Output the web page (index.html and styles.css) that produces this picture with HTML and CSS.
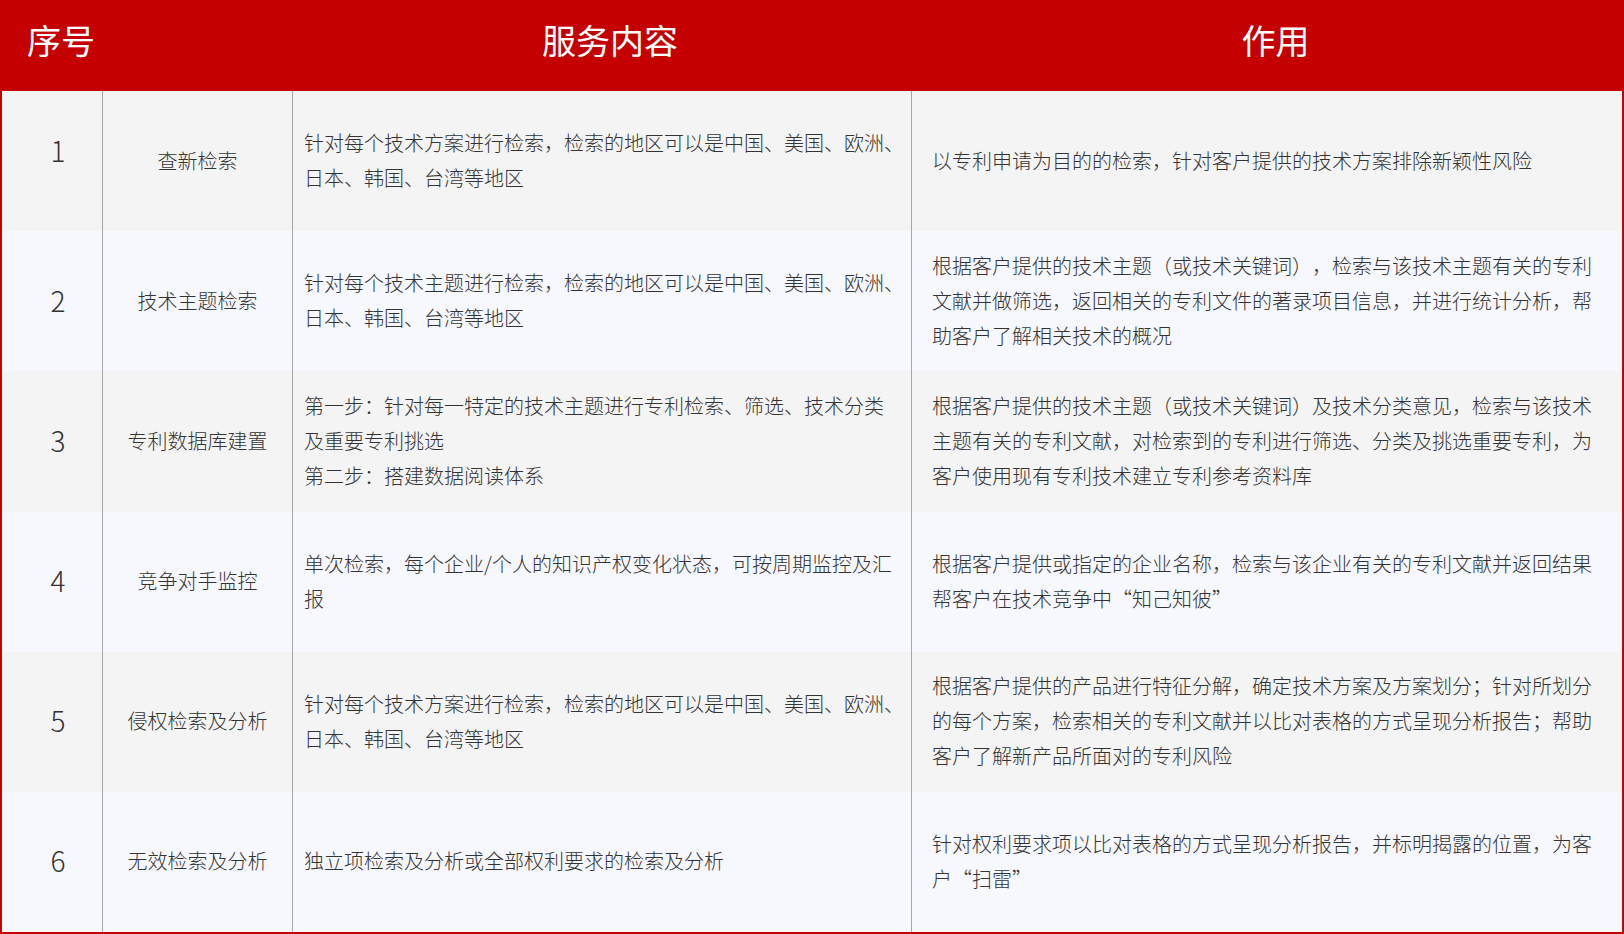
FILE: index.html
```html
<!DOCTYPE html>
<html lang="zh-CN">
<head>
<meta charset="utf-8">
<title>服务内容</title>
<link rel="stylesheet" href="styles.css">
</head>
<body>
<div class="table">
  <div class="head">
    <div class="th">序号</div>
    <div class="th"></div>
    <div class="th">服务内容</div>
    <div class="th">作用</div>
  </div>
  <div class="body">
    <div class="row odd">
      <div class="cell num first">1</div>
      <div class="cell name">查新检索</div>
      <div class="cell desc">针对每个技术方案进行检索，检索的地区可以是中国、美国、欧洲、日本、韩国、台湾等地区</div>
      <div class="cell use">以专利申请为目的的检索，针对客户提供的技术方案排除新颖性风险</div>
    </div>
    <div class="row even">
      <div class="cell num">2</div>
      <div class="cell name">技术主题检索</div>
      <div class="cell desc">针对每个技术主题进行检索，检索的地区可以是中国、美国、欧洲、日本、韩国、台湾等地区</div>
      <div class="cell use">根据客户提供的技术主题（或技术关键词），检索与该技术主题有关的专利文献并做筛选，返回相关的专利文件的著录项目信息，并进行统计分析，帮助客户了解相关技术的概况</div>
    </div>
    <div class="row odd">
      <div class="cell num">3</div>
      <div class="cell name">专利数据库建置</div>
      <div class="cell desc">第一步：针对每一特定的技术主题进行专利检索、筛选、技术分类<br>及重要专利挑选<br>第二步：搭建数据阅读体系</div>
      <div class="cell use">根据客户提供的技术主题（或技术关键词）及技术分类意见，检索与该技术主题有关的专利文献，对检索到的专利进行筛选、分类及挑选重要专利，为客户使用现有专利技术建立专利参考资料库</div>
    </div>
    <div class="row even">
      <div class="cell num">4</div>
      <div class="cell name">竞争对手监控</div>
      <div class="cell desc">单次检索，每个企业/个人的知识产权变化状态，可按周期监控及汇报</div>
      <div class="cell use">根据客户提供或指定的企业名称，检索与该企业有关的专利文献并返回结果帮客户在技术竞争中“知己知彼”</div>
    </div>
    <div class="row odd">
      <div class="cell num">5</div>
      <div class="cell name">侵权检索及分析</div>
      <div class="cell desc">针对每个技术方案进行检索，检索的地区可以是中国、美国、欧洲、日本、韩国、台湾等地区</div>
      <div class="cell use">根据客户提供的产品进行特征分解，确定技术方案及方案划分；针对所划分的每个方案，检索相关的专利文献并以比对表格的方式呈现分析报告；帮助客户了解新产品所面对的专利风险</div>
    </div>
    <div class="row even">
      <div class="cell num">6</div>
      <div class="cell name">无效检索及分析</div>
      <div class="cell desc">独立项检索及分析或全部权利要求的检索及分析</div>
      <div class="cell use">针对权利要求项以比对表格的方式呈现分析报告，并标明揭露的位置，为客户“扫雷”</div>
    </div>
  </div>
</div>
</body>
</html>
```
FILE: styles.css
```css
html, body {
  margin: 0;
  padding: 0;
  background: #ffffff;
}

body {
  font-family: "Noto Sans CJK SC", "Noto Sans", sans-serif;
  color: #333333;
  text-spacing-trim: space-all;
}

.table {
  width: 1624px;
  height: 934px;
  display: flex;
  flex-direction: column;
}

.head {
  height: 91px;
  background: #c40000;
  display: grid;
  grid-template-columns: 103px 190px 619px 1fr;
}

.th {
  display: flex;
  align-items: center;
  justify-content: center;
  padding: 0 0 13px 15px;
  color: #ffffff;
  font-size: 34px;
  font-weight: 400;
}

.th:first-child {
  justify-content: flex-start;
  padding-left: 27px;
}

.body {
  flex: 1;
  display: grid;
  grid-template-rows: repeat(6, 1fr);
  border-left: 2px solid #c40000;
  border-right: 2px solid #a81010;
  border-bottom: 2px solid #c40000;
}

.row {
  display: grid;
  grid-template-columns: 101px 190px 619px 1fr;
}

.row.odd {
  background: #f4f4f4;
}

.row.even {
  background: #f7f7fe;
}

.cell {
  display: flex;
  align-items: center;
  padding-bottom: 2px;
  font-size: 20px;
  line-height: 35px;
  font-weight: 300;
  color: #333333;
}

.cell.num,
.cell.name,
.cell.desc {
  border-right: 1px solid #a6a6a6;
}

.cell.num {
  justify-content: center;
  padding-left: 12px;
  font-size: 28px;
}

.cell.num.first {
  padding-bottom: 22px;
}

.cell.name {
  justify-content: center;
}

.cell.desc {
  padding: 0 4px 2px 11px;
}

.cell.use {
  padding: 0 20px 2px 20px;
}
```
